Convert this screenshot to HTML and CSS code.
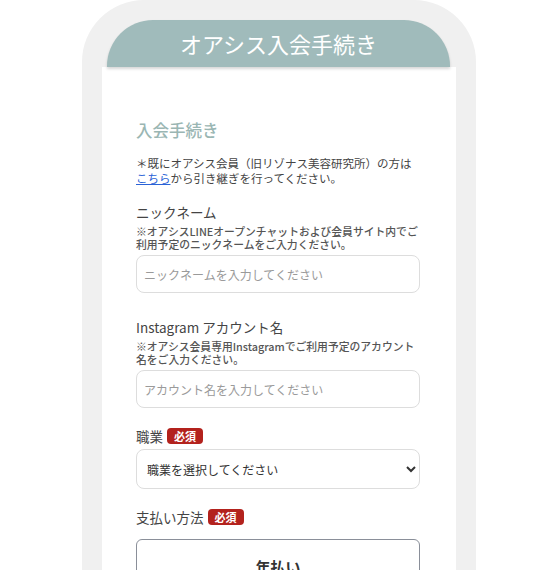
FILE: index.html
```html
<!DOCTYPE html>
<html lang="ja">
<head>
<meta charset="utf-8">
<title>オアシス入会手続き</title>
<link rel="stylesheet" href="styles.css">
</head>
<body>
<div class="frame">
  <div class="screen">
    <header class="topbar">オアシス入会手続き</header>
    <main class="content">
      <h2 class="title">入会手続き</h2>
      <p class="note">＊既にオアシス会員（旧リゾナス美容研究所）の方は<br><a href="#" class="link">こちら</a>から引き継ぎを行ってください。</p>

      <div class="field f1">
        <div class="label">ニックネーム</div>
        <p class="desc">※オアシスLINEオープンチャットおよび会員サイト内でご<br>利用予定のニックネームをご入力ください。</p>
        <input class="input" type="text" placeholder="ニックネームを入力してください">
      </div>

      <div class="field f2">
        <div class="label">Instagram アカウント名</div>
        <p class="desc">※オアシス会員専用Instagramでご利用予定のアカウント<br>名をご入力ください。</p>
        <input class="input" type="text" placeholder="アカウント名を入力してください">
      </div>

      <div class="field f3">
        <div class="label">職業<span class="badge">必須</span></div>
        <select class="select">
          <option>職業を選択してください</option>
        </select>
      </div>

      <div class="field f4">
        <div class="label">支払い方法<span class="badge">必須</span></div>
        <button class="plan" type="button">年払い</button>
      </div>
    </main>
  </div>
</div>
</body>
</html>
```

FILE: styles.css
```css
html, body {
  margin: 0;
  padding: 0;
  background: #ffffff;
  height: 570px;
  overflow: hidden;
}

body {
  font-family: "Noto Sans CJK JP", "Noto Sans", sans-serif;
  color: #444444;
}

.frame {
  width: 354px;
  margin-left: 82px;
  padding: 20px 20px 0 20px;
  min-height: 640px;
  background: #f0f0f0;
  border-radius: 62px 62px 0 0;
}

.screen {
  display: flex;
  flex-direction: column;
}

.topbar {
  position: relative;
  z-index: 1;
  margin: 0 6px 0 5px;
  height: 47px;
  background: #a0bbbb;
  border-radius: 46px 46px 0 0;
  color: #ffffff;
  font-size: 22px;
  line-height: 46px;
  text-align: center;
  box-shadow: 0 2px 3px rgba(0, 0, 0, 0.16);
}

.content {
  background: #ffffff;
  padding: 51px 36px 40px 34px;
  min-height: 600px;
}

.title {
  margin: 0;
  font-size: 16.5px;
  line-height: 24px;
  font-weight: 500;
  color: #9ab6b3;
}

.note {
  margin: 14px 0 0 0;
  font-size: 11.5px;
  line-height: 15px;
  color: #444444;
}

.link {
  color: #2a62d6;
  text-decoration: underline;
}

.field {
  display: flex;
  flex-direction: column;
}

.f1 { margin-top: 16px; }
.f2 { margin-top: 24px; }
.f3 { margin-top: 18px; }
.f4 { margin-top: 18px; }

.label {
  display: flex;
  align-items: center;
  font-size: 13.5px;
  line-height: 20px;
  color: #444444;
}

.badge {
  margin-left: 4px;
  padding: 0 7px;
  height: 16px;
  line-height: 16px;
  background: #b3221d;
  color: #ffffff;
  font-size: 11px;
  font-weight: 700;
  border-radius: 4px;
}

.desc {
  margin: 3px 0 0 0;
  font-size: 10.8px;
  line-height: 13px;
  font-weight: 500;
  color: #555555;
}

.input {
  box-sizing: border-box;
  margin-top: 4px;
  width: 284px;
  height: 38px;
  padding: 0 7px;
  border: 1px solid #dddddd;
  border-radius: 8px;
  font-family: "Noto Sans CJK JP", "Noto Sans", sans-serif;
  font-size: 12px;
  color: #333333;
  background: #ffffff;
}

.input::placeholder {
  color: #9a9a9a;
}

.select {
  box-sizing: border-box;
  margin-top: 3px;
  width: 284px;
  height: 40px;
  padding: 0 6px;
  border: 1px solid #dddddd;
  border-radius: 8px;
  background: #ffffff;
  font-family: "Noto Sans CJK JP", "Noto Sans", sans-serif;
  font-size: 12px;
  color: #333333;
}

.plan {
  box-sizing: border-box;
  margin-top: 12px;
  width: 284px;
  padding: 16px 0;
  border: 1px solid #8a8f99;
  border-radius: 6px;
  background: #ffffff;
  font-family: "Noto Sans CJK JP", "Noto Sans", sans-serif;
  font-size: 15px;
  line-height: 22px;
  font-weight: 700;
  color: #333333;
}
```
